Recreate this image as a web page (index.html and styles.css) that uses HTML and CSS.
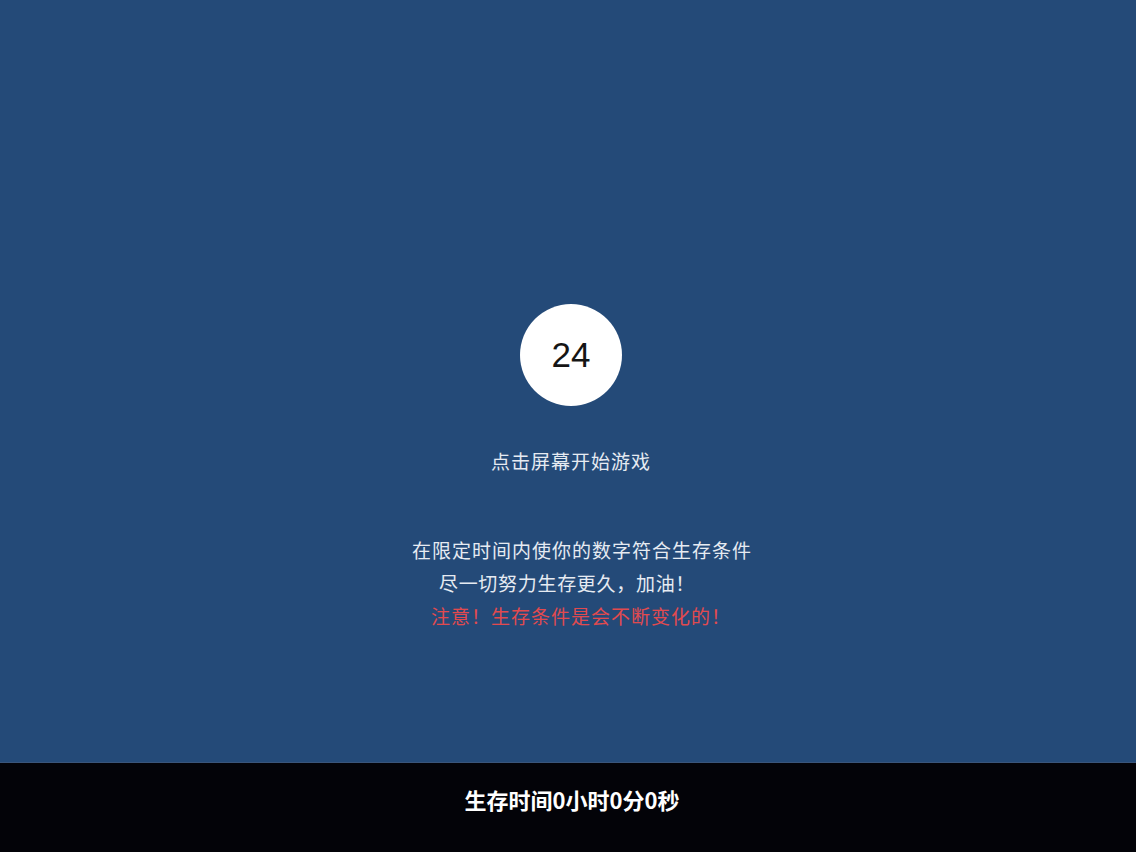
FILE: index.html
```html
<!DOCTYPE html>
<html lang="zh">
<head>
<meta charset="utf-8">
<link rel="stylesheet" href="styles.css">
</head>
<body>
<div class="page">
  <main class="stage">
    <div class="badge">24</div>
    <p class="start">点击屏幕开始游戏</p>
    <div class="rules">
      <p class="line l1">在限定时间内使你的数字符合生存条件</p>
      <p class="line l2">尽一切努力生存更久，加油！</p>
      <p class="line warn">注意！生存条件是会不断变化的！</p>
    </div>
  </main>
  <footer class="bar"><span class="timer">生存时间0小时0分0秒</span></footer>
</div>
</body>
</html>
```
FILE: styles.css
```css
html, body {
  margin: 0;
  padding: 0;
}
body {
  background: #244a78;
  font-family: "Noto Sans CJK SC", "Noto Sans", sans-serif;
}
.page {
  width: 1136px;
  height: 852px;
  display: flex;
  flex-direction: column;
}
.stage {
  flex: 1;
  display: flex;
  flex-direction: column;
  align-items: center;
  padding-top: 304px;
  background: #244a78;
}
.badge {
  width: 102px;
  height: 102px;
  border-radius: 50%;
  background: #ffffff;
  display: flex;
  align-items: center;
  justify-content: center;
  font-family: "Liberation Sans", Arial, sans-serif;
  font-size: 35px;
  color: #151515;
  margin-left: 6px;
}
.start {
  margin: 40px 0 0 6px;
  font-size: 19px;
  line-height: 30px;
  color: #e6ebf2;
  letter-spacing: 1px;
}
.rules {
  margin-top: 57px;
  display: flex;
  flex-direction: column;
  align-items: center;
}
.line {
  margin: 0;
  font-size: 19px;
  line-height: 33px;
  color: #e6ebf2;
  letter-spacing: 1px;
}
.l1 {
  margin-left: 28px;
}
.l2 {
  margin-left: -2px;
  letter-spacing: 0.7px;
}
.warn {
  color: #e24a4f;
  margin-left: 26px;
}
.bar {
  height: 90px;
  background: #030308;
  border-top: 1px solid #3a557a;
  box-sizing: border-box;
  display: flex;
  align-items: center;
  justify-content: center;
  padding-bottom: 18px;
  color: #ffffff;
  font-size: 22px;
  font-weight: bold;
  font-family: "Noto Sans CJK SC", sans-serif;
}
.timer {
  margin-left: 8px;
}
```
